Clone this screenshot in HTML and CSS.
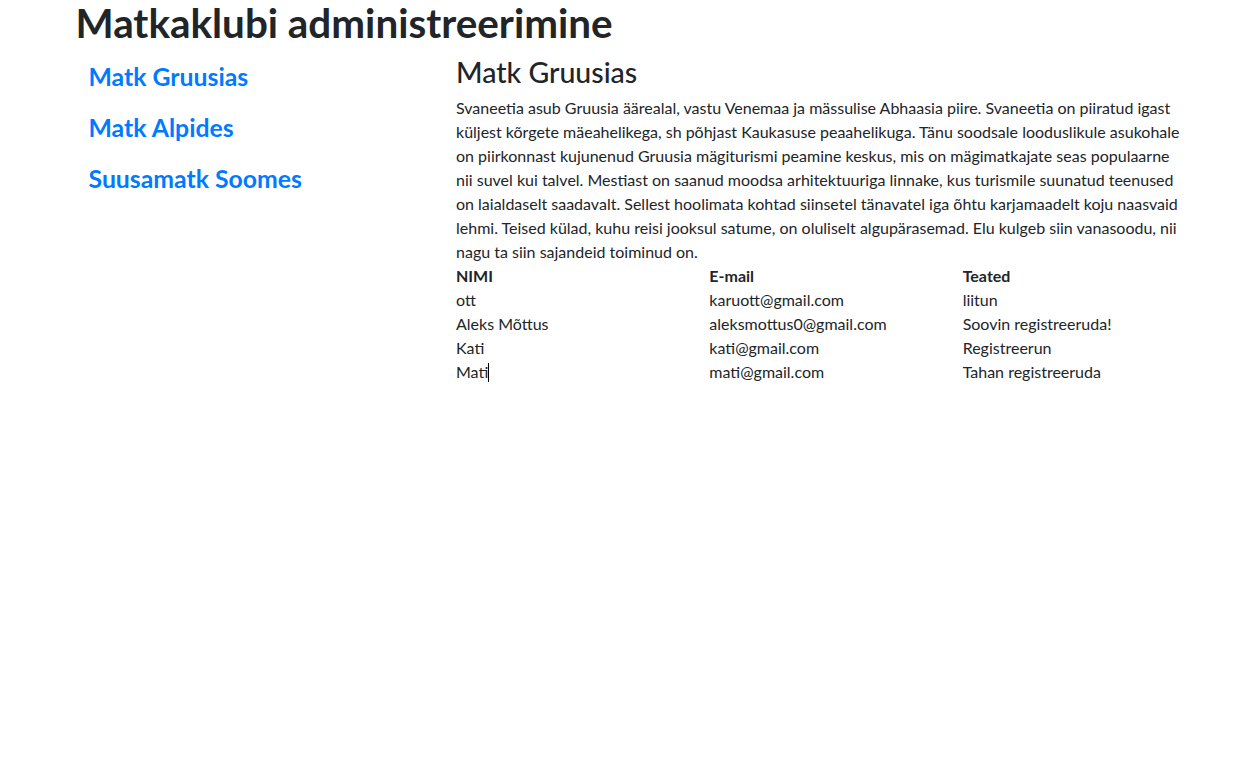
FILE: index.html
```html
<!DOCTYPE html>
<html lang="et">
<head>
<meta charset="utf-8">
<title>Matkaklubi administreerimine</title>
<link rel="stylesheet" href="styles.css">
</head>
<body>
<div class="container">
  <h1 class="page-title">Matkaklubi administreerimine</h1>
  <div class="row">
    <div class="col-side">
      <nav class="side-nav">
        <a class="side-link" href="#">Matk Gruusias</a>
        <a class="side-link" href="#">Matk Alpides</a>
        <a class="side-link" href="#">Suusamatk Soomes</a>
      </nav>
    </div>
    <div class="col-main">
      <h3 class="trip-title">Matk Gruusias</h3>
      <p class="trip-text">Svaneetia asub Gruusia äärealal, vastu Venemaa ja mässulise Abhaasia piire. Svaneetia on piiratud igast küljest kõrgete mäeahelikega, sh põhjast Kaukasuse peaahelikuga. Tänu soodsale looduslikule asukohale on piirkonnast kujunenud Gruusia mägiturismi peamine keskus, mis on mägimatkajate seas populaarne nii suvel kui talvel. Mestiast on saanud moodsa arhitektuuriga linnake, kus turismile suunatud teenused on laialdaselt saadavalt. Sellest hoolimata kohtad siinsetel tänavatel iga õhtu karjamaadelt koju naasvaid lehmi. Teised külad, kuhu reisi jooksul satume, on oluliselt algupärasemad. Elu kulgeb siin vanasoodu, nii nagu ta siin sajandeid toiminud on.</p>
      <div class="people">
        <div class="cell head">NIMI</div>
        <div class="cell head">E-mail</div>
        <div class="cell head">Teated</div>
        <div class="cell">ott</div>
        <div class="cell">karuott@gmail.com</div>
        <div class="cell">liitun</div>
        <div class="cell">Aleks Mõttus</div>
        <div class="cell">aleksmottus0@gmail.com</div>
        <div class="cell">Soovin registreeruda!</div>
        <div class="cell">Kati</div>
        <div class="cell">kati@gmail.com</div>
        <div class="cell">Registreerun</div>
        <div class="cell">Mati<span class="caret"></span></div>
        <div class="cell">mati@gmail.com</div>
        <div class="cell">Tahan registreeruda</div>
      </div>
    </div>
  </div>
</div>
</body>
</html>
```
FILE: styles.css
```css
html, body {
  margin: 0;
  background: #fff;
}
body {
  font-family: Lato, "Noto Sans", sans-serif;
  font-size: 16px;
  line-height: 24px;
  color: #212529;
}
.container {
  width: 1140px;
  margin: 0 auto;
  padding: 0 15px;
  box-sizing: border-box;
}
.page-title {
  margin: -1px 0 7px;
  padding-left: 3px;
  font-size: 40.4px;
  line-height: 48px;
  font-weight: 700;
}
.row {
  display: flex;
  margin: 0 -15px;
}
.col-side {
  flex: 0 0 383.5px;
  padding: 0 15px;
  box-sizing: border-box;
}
.col-main {
  flex: 0 0 760px;
  padding: 0 15px;
  box-sizing: border-box;
}
.side-nav {
  display: flex;
  flex-direction: column;
  gap: 16px;
  padding-top: 5px;
}
.side-link {
  display: block;
  padding: 0 16px;
  font-size: 24.8px;
  line-height: 35px;
  font-weight: 700;
  color: #007bff;
  text-decoration: none;
}
.trip-title {
  margin: 2px 0 6px;
  font-size: 28.5px;
  line-height: 33.6px;
  font-weight: 500;
}
.trip-text {
  margin: 0;
}
.people {
  display: grid;
  grid-template-columns: repeat(3, 1fr);
  margin: 0 -15px;
}
.cell {
  padding: 0 15px;
  white-space: nowrap;
}
.head {
  font-weight: 700;
}
.caret {
  display: inline-block;
  width: 1px;
  height: 19px;
  background: #000;
  vertical-align: -4px;
}
```
